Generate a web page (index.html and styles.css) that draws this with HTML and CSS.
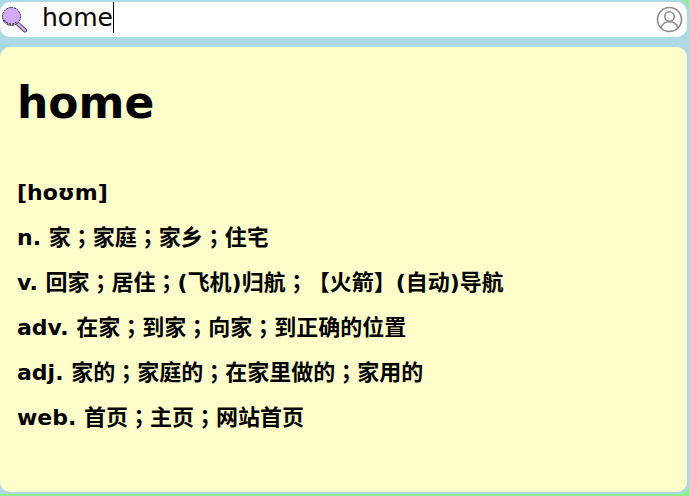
FILE: index.html
```html
<!DOCTYPE html>
<html lang="en">
<head>
<meta charset="utf-8">
<title>home</title>
<link rel="stylesheet" href="styles.css">
</head>
<body>
<div class="panel">
  <form class="search" role="search">
    <label class="search-icon" for="query" aria-label="Search">
      <svg width="26" height="26" viewBox="0 0 26 26">
        <path d="M16.500 17.500l6.500 6" stroke="#222" stroke-width="4" stroke-linecap="round"/>
        <path d="M16 17l7 6.500" stroke="#d4aaf7" stroke-width="2.400" stroke-linecap="round"/>
        <circle cx="9.500" cy="9.500" r="9" fill="#d4aaf7"/>
        <circle cx="9.500" cy="9.500" r="9" fill="none" stroke="#111" stroke-dasharray="2 .8"/>
        <path d="M2.500 13c2 4 8 6 12 2" fill="none" stroke="#111" stroke-dasharray="2 1"/>
      </svg>
    </label>
    <input class="query" id="query" type="text" value="home" autocomplete="off" spellcheck="false">
    <button class="account" type="button" aria-label="Account">
      <svg width="26" height="26" viewBox="0 0 26 26" fill="none" stroke="#8c8c8c" stroke-width="1.600">
        <circle cx="12.500" cy="12.500" r="12"/>
        <circle cx="12.500" cy="9.500" r="4.700"/>
        <path d="M3.800 20.500c2-4 5-5.700 8.700-5.700s6.700 1.700 8.700 5.700"/>
      </svg>
    </button>
  </form>
  <main class="entry">
    <h1 class="word">home</h1>
    <p class="phonetic">[hoʊm]</p>
    <p class="line">n. 家；家庭；家乡；住宅</p>
    <p class="line">v. 回家；居住；(飞机)归航；【火箭】(自动)导航</p>
    <p class="line">adv. 在家；到家；向家；到正确的位置</p>
    <p class="line">adj. 家的；家庭的；在家里做的；家用的</p>
    <p class="line">web. 首页；主页；网站首页</p>
  </main>
</div>
</body>
</html>
```

FILE: styles.css
```css
* { box-sizing: border-box; }
body {
  margin: 0;
  min-height: 100vh;
  padding-bottom: 2px;
  display: flex;
  flex-direction: column;
  background: #90ee90;
  color: #000;
  font-family: "DejaVu Sans", "Noto Sans CJK TC", sans-serif;
}
.panel {
  flex: 1;
  display: flex;
  flex-direction: column;
  gap: 10px;
  padding: 2px 2px 2px 0;
  background: #add8e6;
  border-radius: 0 10px 10px 0;
}
.search {
  display: flex;
  align-items: center;
  height: 35px;
  padding: 0 4px 0 2px;
  background: #fff;
  border-radius: 10px;
}
.search-icon, .account { display: flex; }
.search-icon svg, .account svg { overflow: visible; }
.query {
  field-sizing: content;
  align-self: flex-start;
  min-width: 1px;
  margin-left: 14px;
  padding: 0;
  border: 0;
  border-right: 1px solid #000;
  outline: 0;
  background: none;
  color: inherit;
  font: 25px/31px "DejaVu Sans", sans-serif;
}
.account { margin-left: auto; padding: 0; border: 0; background: none; }
.entry {
  flex: 1;
  padding: 24px 17px;
  background: #ffffcc;
  border-radius: 10px;
  font-weight: bold;
  text-spacing-trim: space-all;
}
.word { margin: 0 0 36px; font-size: 44px; line-height: 64px; }
.phonetic { margin: 0; font-size: 22px; line-height: 44px; }
.line { margin: 0; font-size: 22px; line-height: 45px; }
```
